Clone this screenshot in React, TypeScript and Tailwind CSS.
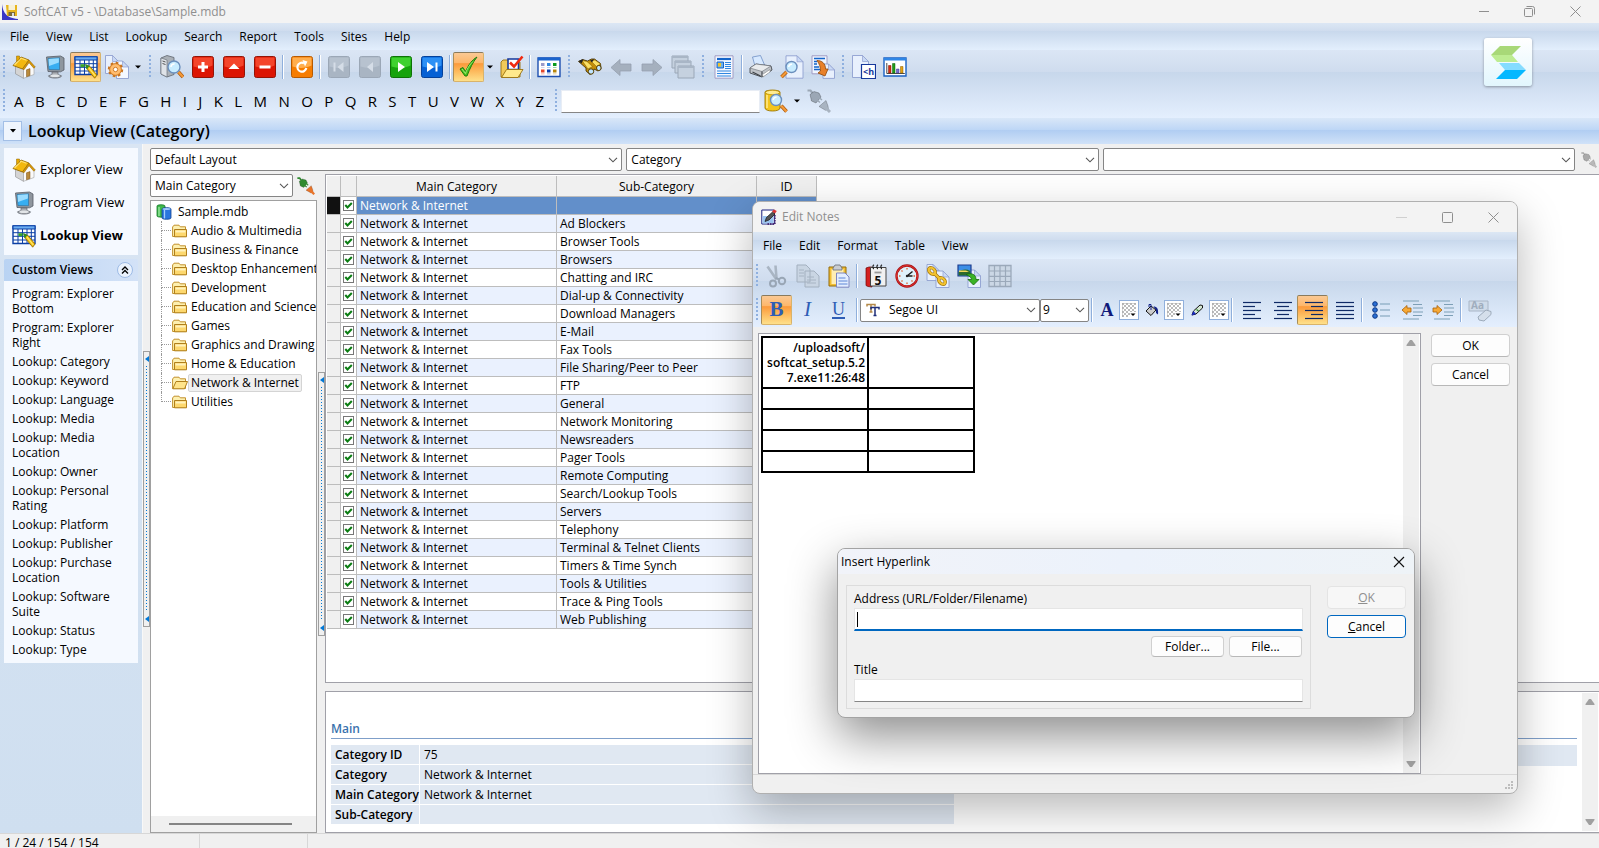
import { useState, type ReactNode } from "react";
import clsx from "clsx";

const SUB_CATEGORIES = [
  "",
  "Ad Blockers",
  "Browser Tools",
  "Browsers",
  "Chatting and IRC",
  "Dial-up & Connectivity",
  "Download Managers",
  "E-Mail",
  "Fax Tools",
  "File Sharing/Peer to Peer",
  "FTP",
  "General",
  "Network Monitoring",
  "Newsreaders",
  "Pager Tools",
  "Remote Computing",
  "Search/Lookup Tools",
  "Servers",
  "Telephony",
  "Terminal & Telnet Clients",
  "Timers & Time Synch",
  "Tools & Utilities",
  "Trace & Ping Tools",
  "Web Publishing",
];

const TREE = [
  "Audio & Multimedia",
  "Business & Finance",
  "Desktop Enhancement",
  "Development",
  "Education and Science",
  "Games",
  "Graphics and Drawing",
  "Home & Education",
  "Network & Internet",
  "Utilities",
];

const CUSTOM_VIEWS = [
  "Program: Explorer Bottom",
  "Program: Explorer Right",
  "Lookup: Category",
  "Lookup: Keyword",
  "Lookup: Language",
  "Lookup: Media",
  "Lookup: Media Location",
  "Lookup: Owner",
  "Lookup: Personal Rating",
  "Lookup: Platform",
  "Lookup: Publisher",
  "Lookup: Purchase Location",
  "Lookup: Software Suite",
  "Lookup: Status",
  "Lookup: Type",
];

const DETAILS = [
  ["Category ID", "75"],
  ["Category", "Network & Internet"],
  ["Main Category", "Network & Internet"],
  ["Sub-Category", ""],
];

/* ---------- icons ---------- */

function Icon({ children, className = "h-6 w-6" }: { children: ReactNode; className?: string }) {
  return (
    <svg viewBox="0 0 24 24" className={clsx("shrink-0", className)} fill="none" aria-hidden="true">
      {children}
    </svg>
  );
}

const HomeIcon = () => (
  <Icon>
    <path d="M3.500 11l8 3v9.300l-8-4.500z" fill="#d4d4d4" stroke="#8c8c8c" strokeWidth=".6" />
    <path d="M11.500 14l5.500-7.500 5 5.500v7.500l-10.500 3.800z" fill="#fafafa" stroke="#a0a0a0" strokeWidth=".6" />
    <path d="M14.500 21.800v-7l3.500-1.200v7z" fill="#b98a3c" stroke="#7a4f10" strokeWidth=".5" />
    <path d="M1 10.500L9 2l8 3-6.500 9z" fill="#f3b80e" stroke="#8f6500" strokeWidth=".8" />
    <path d="M2.500 10L9 3.300l5.500 2" stroke="#ffe173" strokeWidth="1.200" />
    <path d="M17 5l6.300 7-1.500 1.200-4.800-5.500-5 7-1.500-.7z" fill="#d9980a" stroke="#8f6500" strokeWidth=".5" />
    <path d="M4.500 1h3v3.200l-3 2.300z" fill="#e8a900" stroke="#8f6500" strokeWidth=".5" />
  </Icon>
);

const MonitorIcon = () => (
  <Icon>
    <path d="M3.500 2l14-1 3.500 2v12l-3.500 1.800L5 16.500z" fill="#8f969e" stroke="#555c66" strokeWidth=".8" />
    <path d="M5 3.500l11.500-.8v12L6 14.500z" fill="#37aef2" stroke="#2b6e9e" strokeWidth=".6" />
    <path d="M5.600 4l10.300-.7v4.200L6 11z" fill="#9adcff" />
    <path d="M9 17h6v2.500l3.500 1.300c0 3-13 3-13 0L9 19.500z" fill="#a9adb3" stroke="#5b6068" strokeWidth=".7" />
    <ellipse cx="12" cy="20.800" rx="4.600" ry="1.200" fill="#e2e5e8" />
  </Icon>
);

const LookupIcon = () => (
  <Icon>
    <path d="M1 2h22v17.500H1z" fill="#fff" stroke="#0b3fa5" strokeWidth="1.400" />
    <path d="M1 1.800h22v3.200H1z" fill="#6badf2" stroke="#0b3fa5" />
    <path d="M6 5v14.500M10.500 5v14.500M15 5v14.500M19.300 5v14.500M1 8.700h22M1 12.300h22M1 16h22" stroke="#0b3fa5" strokeWidth="1" />
    <path d="M6.500 9.200h4v3h-4z" fill="#3aa52a" />
    <path d="M12 10l4 1.500 7 8.500-2.300 3.200-7.200-8.700z" fill="#f4c20d" stroke="#8a6100" strokeWidth=".8" />
    <path d="M11 9l4.500 2-3 3.500z" fill="#2f8f22" />
    <path d="M15 13l6.300 8" stroke="#ffe87a" strokeWidth="1.200" />
  </Icon>
);

const PageShape = ({ x = 4, y = 1, w = 17, h = 22, tint = "#e8f0fd" }) => (
  <>
    <path d={`M${x} ${y}h${w - 6}l6 6v${h - 6}h${-w}z`} fill={tint} stroke="#8f9fd0" strokeWidth=".9" />
    <path d={`M${x + w - 6} ${y}v6h6z`} fill="#c9d9f5" stroke="#8f9fd0" strokeWidth=".7" />
  </>
);

const GearPageIcon = () => (
  <Icon>
    <PageShape x={0.5} y={0.5} w={13} h={18} />
    <PageShape x={11.5} y={6} w={12} h={17.5} tint="#f4f8ff" />
    <circle cx="10.500" cy="14.500" r="6" fill="#f7a54a" stroke="#c8711b" strokeWidth=".8" />
    <circle cx="10.500" cy="14.500" r="6.800" stroke="#c8711b" strokeWidth="1.800" strokeDasharray="2.700 2.640" />
    <circle cx="10.500" cy="14.500" r="5" fill="#ffbd70" />
    <circle cx="10.500" cy="14.500" r="2.200" fill="#fff" stroke="#c8711b" strokeWidth=".9" />
  </Icon>
);

const Lens = ({ cx, cy, r = 6, hx, hy }: { cx: number; cy: number; r?: number; hx: number; hy: number }) => (
  <>
    <path d={`M${cx + (hx - cx) * 0.5} ${cy + (hy - cy) * 0.5}L${hx} ${hy}`} stroke="#a9560d" strokeWidth="3.600" />
    <path d={`M${cx + (hx - cx) * 0.5} ${cy + (hy - cy) * 0.5}L${hx} ${hy}`} stroke="#f59a37" strokeWidth="2.200" />
    <circle cx={cx} cy={cy} r={r} fill="#c8ecff" stroke="#6b8fbd" strokeWidth="1.400" />
    <path d={`M${cx - r * 0.5} ${cy}a${r * 0.5} ${r * 0.5} 0 0 1 ${r * 0.6} ${-r * 0.5}`} stroke="#fff" strokeWidth="1.500" />
  </>
);

const SearchTowerIcon = () => (
  <Icon>
    <path d="M1 3l6-2.500 7 2v17L7 22l-6-3z" fill="#aab0b7" stroke="#60666e" strokeWidth=".8" />
    <path d="M1 3l6 2v17l-6-3z" fill="#dfe3e8" stroke="#60666e" strokeWidth=".6" />
    <path d="M2.500 6l3 1M2.500 8.500l3 1" stroke="#555" />
    <Lens cx={14} cy={12} r={6} hx={23} hy={22} />
  </Icon>
);

function SquareIcon({ tone, children }: { tone: string; children: ReactNode }) {
  const fills: Record<string, string[]> = {
    red: ["#f4452b", "#dc1503", "#941406"],
    orange: ["#ffae4e", "#f67c00", "#b75a00"],
    gray: ["#b7c2cf", "#a9b5c3", "#9ba7b6"],
    green: ["#3fd12f", "#16a30c", "#0d7306"],
    blue: ["#2d90f5", "#0560d4", "#04419a"],
  };
  const [hi, lo, edge] = fills[tone];
  return (
    <Icon>
      <rect x="1.500" y="1.500" width="21" height="21" rx="2" fill={lo} stroke={edge} />
      <path d="M2.500 2.500h19v8c-6 3-13 3-19 1z" fill={hi} />
      {children}
    </Icon>
  );
}

const CheckIcon = () => (
  <Icon>
    <path d="M3 14l3-1.500 2.500 4C12 9 15 5 20 2c-4 5-7 11-10 19H8z" fill="#4cc21f" stroke="#1c7d0c" strokeWidth="1" />
    <path d="M5 14l3.500 4.500c2-6 4.500-9 7.500-12" stroke="#a8ec7c" strokeWidth=".9" />
  </Icon>
);

const FolderCheckIcon = () => (
  <Icon>
    <path d="M1 22V7l2-2h6l2 2h9v15z" fill="#f1c95a" stroke="#99700e" strokeWidth=".9" />
    <path d="M8 4h10.500v10.500H8z" fill="#fff" stroke="#15379c" strokeWidth="1.600" />
    <path d="M1.500 22.500l5-8H23l-5 8z" fill="#ffe98c" stroke="#99700e" strokeWidth=".9" />
    <path d="M10 7.500l4 4 8.500-10" stroke="#f02a10" strokeWidth="2.600" />
  </Icon>
);

const GridViewIcon = () => (
  <Icon>
    <path d="M1 3h22v18.500H1z" fill="#fff" stroke="#1d4fb0" strokeWidth="1.400" />
    <path d="M1 2.500h22v3H1z" fill="#1a63cc" />
    {["#9a9ac9", "#2f86e0", "#0a9a1a", "#e4462a", "#0a3fae", "#b8860b"].map((c, i) => (
      <g key={i} fill={c}>
        <path d={`M${4 + (i % 3) * 6} ${8 + Math.floor(i / 3) * 6.500}h3.500v3h-3.500z`} />
        <path d={`M${4 + (i % 3) * 6} ${12 + Math.floor(i / 3) * 6.500}h3.500v.8h-3.500z`} opacity=".5" />
      </g>
    ))}
  </Icon>
);

const BinocularsIcon = () => (
  <Icon>
    <path d="M.5 6.500l4-2 5 1.500 4-2h3l6 4.500.5 5.500-3 2-4-2-1 4-3 1.500-4-3.500v-3z" fill="#c48e08" stroke="#3b2a00" strokeWidth=".8" />
    <path d="M4 5.500l5 1 5.500 5-4.500 2.500zM13 6l4-1 5.500 4-4 2.500z" fill="#fbe065" stroke="#7a5800" strokeWidth=".5" />
    <path d="M.5 6l5-2-2 4.500zM12 5.500l4-1.500-2 3.500z" fill="#222" />
    <ellipse cx="13" cy="16.500" rx="2.700" ry="2.700" fill="#bfe4ff" stroke="#5a4200" />
    <ellipse cx="20.800" cy="13" rx="2.300" ry="2.600" fill="#bfe4ff" stroke="#5a4200" />
  </Icon>
);

const ArrowIcon = ({ flip = false }: { flip?: boolean }) => (
  <Icon>
    <path
      d={flip ? "M22 12.500l-9-8V9H2v7h11v4.500z" : "M2 12.500l9-8V9h11v7H11v4.500z"}
      fill="#a5b0be"
      stroke="#94a0af"
      strokeWidth=".8"
    />
  </Icon>
);

const CascadeIcon = () => (
  <Icon>
    {[0, 1, 2].map((i) => (
      <g key={i}>
        <path d={`M${1 + i * 3} ${1 + i * 5}h16v12h-16z`} fill="#c5d1df" stroke="#9aa7b7" />
        <path d={`M${1 + i * 3} ${1 + i * 5}h16v2h-16z`} fill="#a9b6c6" />
      </g>
    ))}
  </Icon>
);

const ReportIcon = () => (
  <Icon>
    <path d="M3 .8h18v22.400H3z" fill="#f3f7ff" stroke="#a09cc4" />
    <path d="M5 4h14" stroke="#1565c9" strokeWidth="2.200" />
    <path d="M5 7h6.500v6H5z" fill="#6fb0ea" stroke="#1565c9" />
    <path d="M6 8h3v3.500H6z" fill="#f0c22a" />
    <path d="M13 7.500h6M13 9.500h6M13 11.500h6M13 13.500h6M5 16h14M5 18.500h14M5 21h14" stroke="#2f86e0" strokeWidth="1.100" />
  </Icon>
);

const PrinterIcon = () => (
  <Icon>
    <path d="M6 11L3.500 2l8-1.500L16 11z" fill="#d7e9ff" stroke="#6f8fc4" strokeWidth=".8" />
    <path d="M1 13l6-4 15 2 1 4-10 7L1 18z" fill="#bfc3c8" stroke="#45494f" strokeWidth=".9" />
    <path d="M1 13l6-4 15 2-9 5.500z" fill="#e9ebed" stroke="#6a6f76" strokeWidth=".6" />
    <path d="M3.500 17l8 4M13 16.500v5" stroke="#3b3f45" strokeWidth="1.100" />
    <path d="M13.500 19.500l7.500-5v2.500L14 22z" fill="#fff" stroke="#777" strokeWidth=".5" />
  </Icon>
);

const PreviewIcon = () => (
  <Icon>
    <PageShape x={6} y={0.8} w={17} h={22.400} />
    <Lens cx={11.500} cy={12} r={5.500} hx={1.500} hy={22} />
  </Icon>
);

const ExportIcon = () => (
  <Icon>
    <path d="M1 .8h15v18H1z" fill="#eff5ff" stroke="#a09cc4" />
    <path d="M3 3.500h11M3 6.500h3M3 9h3M3 12h5M3 14.500h6" stroke="#1565c9" strokeWidth="1.500" />
    <PageShape x={12} y={9} w={11.500} h={14.400} />
    <path d="M6 5.500c5 0 8.500 3 8.500 8.500H17l-3 7-7-3 2.500-2c0-4-1-7-3.500-10.500z" fill="#e8802a" stroke="#8f4608" strokeWidth=".8" />
  </Icon>
);

const HtmlIcon = () => (
  <Icon>
    <PageShape x={0.5} y={0.5} w={16} h={22} />
    <path d="M9.500 9.500h14v14h-14z" fill="#fff" stroke="#16379b" strokeWidth="1.200" />
    <text x="11" y="20" fontSize="9" fontWeight="700" fill="#16379b" fontFamily="Open Sans, sans-serif">
      &lt;h
    </text>
  </Icon>
);

const ChartIcon = () => (
  <Icon>
    <path d="M1 3h22v18H1z" fill="#fff" stroke="#1b62c4" strokeWidth="1.400" />
    <path d="M1 3h22v2.500H1z" fill="#2f86e6" />
    <path d="M3.800 8v10.500h18" stroke="#333" strokeWidth=".9" />
    <path d="M5.500 10.500h2.500v7.500H5.500z" fill="#d52b12" stroke="#7c1405" strokeWidth=".5" />
    <path d="M9.500 8.500h2.500v9.500H9.500z" fill="#1f9d1a" stroke="#0b5c08" strokeWidth=".5" />
    <path d="M13.500 14h2.500v4h-2.500z" fill="#7a6fd0" stroke="#3d3590" strokeWidth=".5" />
    <path d="M17.500 11.500h2.500v6.500h-2.500z" fill="#e5a312" stroke="#875d00" strokeWidth=".5" />
  </Icon>
);

const DbSearchIcon = () => (
  <Icon>
    <path d="M1 3c0-2.500 15-2.500 15 0v16c0 4-15 4-15 0z" fill="#f3c51d" stroke="#9c7600" strokeWidth=".9" />
    <ellipse cx="8.500" cy="3.500" rx="7" ry="2.200" fill="#ffec91" stroke="#b58b00" strokeWidth=".7" />
    <path d="M3 6v13" stroke="#ffe98a" strokeWidth="1.600" />
    <Lens cx={12} cy={11} r={5.500} hx={22.500} hy={22.500} />
  </Icon>
);

function PlugIcon({ top, bottom, className }: { top: string; bottom: string; className?: string }) {
  return (
    <Icon className={className}>
      <path d="M.5 1.500h3l2 2.500" stroke={top} strokeWidth="2.200" />
      <path d="M3 5.500L7 2.500l5 1.500L14 8l-5 6-4.500-2z" fill={top} stroke="rgba(0,0,0,.35)" strokeWidth=".7" />
      <path d="M12 8.500l3 2.500M10 11l3 2.500" stroke={top} strokeWidth="1.500" />
      <path d="M12 17.500l7-6 2 5.500.5 3.500-3 .8z" fill={bottom} stroke="rgba(0,0,0,.3)" strokeWidth=".7" />
      <path d="M18.500 18.500l4.500 4.500" stroke={bottom} strokeWidth="3" />
    </Icon>
  );
}

const FolderIcon = ({ open = false }: { open?: boolean }) => (
  <svg viewBox="0 0 16 14" className="h-[14px] w-4 shrink-0" fill="none" aria-hidden="true">
    <path d="M.6 12.500V3L2 1.200h5l1.300 1.600h5.200v9.700z" fill="#fdf0b0" stroke="#c2912e" />
    {open ? (
      <path d="M.8 12.800L4 5.500h11.500l-3 7.300z" fill="#ffe48a" stroke="#b07f1c" />
    ) : (
      <path d="M2.500 5.500h12v7.300h-12z" fill="#fdd86e" stroke="#b07f1c" />
    )}
    {!open && <path d="M3.500 6.500h10v2h-10z" fill="#fff2bd" />}
  </svg>
);

const DatabaseIcon = () => (
  <svg viewBox="0 0 16 16" className="h-4 w-4 shrink-0" fill="none" aria-hidden="true">
    <path d="M1 2c0-1.600 8-1.600 8 0v10c0 1.500-8 1.500-8 0z" fill="#3fb84b" stroke="#14762a" strokeWidth=".8" />
    <path d="M3 3v9" stroke="#a9f0ae" strokeWidth="1.200" />
    <path d="M6 5c0-1.800 9-1.800 9 0v9c0 1.700-9 1.700-9 0z" fill="#2a76de" stroke="#12418f" strokeWidth=".8" />
    <path d="M8.500 6v8.500" stroke="#a4cdfb" strokeWidth="1.300" />
    <ellipse cx="10.500" cy="5" rx="4" ry="1" fill="#9fc8fa" />
  </svg>
);

const CutIcon = () => (
  <Icon>
    <path d="M2.500 2.500l9 13M10.500 1.500l1 13" stroke="#a9b5c3" strokeWidth="2.600" />
    <circle cx="8" cy="19.500" r="3" stroke="#99a6b5" strokeWidth="2" />
    <circle cx="17" cy="17" r="3.200" stroke="#99a6b5" strokeWidth="2" />
    <path d="M10.500 14l4 1.500" stroke="#99a6b5" strokeWidth="2" />
  </Icon>
);

const CopyIcon = () => (
  <Icon>
    <path d="M1 1h9l4 4v13H1zM9 7h9l5 5v11H9z" fill="#c9d5e3" stroke="#a3b0bf" />
    <path d="M3 6h5M3 9h5M3 12h5M11 13h7M11 16h9M11 19h9" stroke="#a7b4c3" />
  </Icon>
);

const PasteIcon = () => (
  <Icon>
    <path d="M2 3h17v19H2z" fill="#f2bf34" stroke="#936a0a" />
    <path d="M4.500 5h12v15h-12z" fill="#ffeeb4" />
    <path d="M6 4l2-3h5l2 3v2H6z" fill="#c8ccd2" stroke="#666b73" strokeWidth=".8" />
    <path d="M9.500 9h8.500l4 4v10.200H9.500z" fill="#e3edff" stroke="#7c86c0" />
    <path d="M11.500 14h7M11.500 17h9M11.500 20h9" stroke="#5d86d6" />
  </Icon>
);

const CalendarIcon = () => (
  <Icon>
    <path d="M2 4l3-1h3v20l-4-.5-2-1z" fill="#d42020" stroke="#6d0707" strokeWidth=".7" />
    <path d="M6.500 3.500H22V22H6.500z" fill="#f1f1f1" stroke="#444" strokeWidth="1" />
    <path d="M10 .8c-2 1-1 4 0 4M14 .8c-2 1-1 4 0 4M18 .8c-2 1-1 4 0 4" stroke="#222" strokeWidth="1.200" />
    <path d="M10.500 8.500h7" stroke="#999" strokeWidth="1.800" />
    <text x="10.500" y="20.500" fontSize="12" fontWeight="700" fill="#111" fontFamily="Open Sans, sans-serif">
      5
    </text>
  </Icon>
);

const ClockIcon = () => (
  <Icon>
    <circle cx="12" cy="12" r="10.500" fill="#dff2fb" stroke="#a81212" strokeWidth="2.300" />
    <circle cx="12" cy="12" r="10.500" stroke="#e03232" strokeWidth="1" />
    <path d="M12 12l5.500-4.500M12 12h5.500" stroke="#1c1c1c" strokeWidth="1.400" />
    <circle cx="12" cy="12" r="1.200" fill="#222" />
    <path d="M12 4v1.500M12 18.500V20M4 12h1.500M18.500 12H20M6.500 17.500l1-1M16.500 16.500l1 1M6.500 6.500l1 1" stroke="#e06030" strokeWidth="1.300" />
  </Icon>
);

const LinkPageIcon = () => (
  <Icon>
    <PageShape x={1} y={0.5} w={12} h={16} />
    <PageShape x={10} y={7} w={13} h={16.500} />
    <g stroke="#9b7008" strokeWidth="3.400">
      <ellipse cx="6" cy="7" rx="2.600" ry="3.800" transform="rotate(-45 6 7)" />
      <ellipse cx="16" cy="17" rx="2.600" ry="3.800" transform="rotate(-45 16 17)" />
      <path d="M8 9l6 6" />
    </g>
    <g stroke="#f2c230" strokeWidth="2.200">
      <ellipse cx="6" cy="7" rx="2.600" ry="3.800" transform="rotate(-45 6 7)" />
      <ellipse cx="16" cy="17" rx="2.600" ry="3.800" transform="rotate(-45 16 17)" />
      <path d="M8 9l6 6" />
    </g>
  </Icon>
);

const ImageInsertIcon = () => (
  <Icon>
    <PageShape x={11} y={6} w={12.500} h={17.500} />
    <path d="M1 1h13v11H1z" fill="#3b8ee6" stroke="#1d3c8f" strokeWidth="1.200" />
    <path d="M1.600 8c4-3 8-3 11.800-1v4.500H1.600z" fill="#2d6a2c" />
    <path d="M2 6.500h7l3 1.500H2z" fill="#f2d75a" />
    <path d="M9 10.500c6-2 10 0 10 5h3L16.500 21l-5.500-5.500h3.500c0-2-2-3.500-5.500-5z" fill="#3bb326" stroke="#17690b" strokeWidth=".8" />
  </Icon>
);

const TableGridIcon = () => (
  <Icon>
    <path d="M1 1.500h22v21H1z" fill="#cbd7e5" stroke="#9ba9ba" strokeWidth="1.300" />
    <path d="M6.500 1.500v21M12 1.500v21M17.500 1.500v21M1 7h22M1 12.300h22M1 17.500h22" stroke="#9ba9ba" strokeWidth="1.200" />
  </Icon>
);

const AlignIcon = ({ kind }: { kind: "left" | "center" | "right" | "full" }) => {
  const lens = [18, 12, 18, 12, 18];
  return (
    <Icon>
      {lens.map((l, i) => {
        const w = kind === "full" ? 18 : l;
        const x = kind === "right" ? 22 - w : kind === "center" ? 13 - w / 2 : 4;
        return <path key={i} d={`M${x} ${4.500 + i * 4}h${w}`} stroke="#0f2a66" strokeWidth="1.200" />;
      })}
    </Icon>
  );
};

const ListIcon = () => (
  <Icon>
    {[6, 12, 18].map((y) => (
      <g key={y}>
        <circle cx="6" cy={y} r="2.300" fill="#2b6fd4" stroke="#0c3786" />
        <path d={`M11 ${y}h10`} stroke="#86a8bf" strokeWidth="1.200" />
      </g>
    ))}
  </Icon>
);

const IndentIcon = ({ out = false }: { out?: boolean }) => (
  <Icon>
    <path d="M3 3h16M13 6.500h9M13 10h10M13 14h10M13 17.500h9M3 21h16" stroke="#7d9fb6" strokeWidth="1.200" />
    <path
      d={out ? "M2 12l5-4.500V10h4v4H7v2.500z" : "M11 12L6 7.500V10H2v4h4v2.500z"}
      fill="#f7a935"
      stroke="#a85f07"
      strokeWidth=".8"
    />
  </Icon>
);

const ClearFormatIcon = () => (
  <Icon>
    <path d="M1 3h19v10H1z" fill="#cfdbe9" stroke="#a9b6c6" />
    <text x="3" y="11" fontSize="10" fontWeight="700" fill="#9fadbd" fontFamily="Open Sans, sans-serif">
      Aa
    </text>
    <path d="M10 19l8-7 5 1.500v3l-7 6.500-5-1z" fill="#d5dfeb" stroke="#9dabbb" />
  </Icon>
);

const BucketIcon = () => (
  <svg viewBox="0 0 14 14" className="h-[14px] w-[14px]" fill="none" aria-hidden="true">
    <path d="M1 8l5-5 5 4-5 5.500z" fill="#ccc" stroke="#111" />
    <path d="M6 7V1.500H4V4" stroke="#10208a" />
    <path d="M8.500 3.500c3.500 0 5 2 4.500 8l-2-1.500V7z" fill="#10208a" />
  </svg>
);

const PenIcon = () => (
  <svg viewBox="0 0 14 14" className="h-[14px] w-[14px]" fill="none" aria-hidden="true">
    <path d="M2 12l1.500-4L10 2l2.500.5V5L6 11z" fill="#d5e8d5" stroke="#111" strokeWidth="1" />
    <path d="M1.500 12.500L3.500 8 6 11z" fill="#1a2ac0" />
    <path d="M6.500 6.500l2 1.500" stroke="#2a8a2a" strokeWidth="1.300" />
  </svg>
);

const Chevron = () => (
  <svg viewBox="0 0 10 6" className="pointer-events-none absolute top-1/2 right-1 h-[6px] w-[10px] -translate-y-1/2" fill="none">
    <path d="M1 .8l4 4 4-4" stroke="#555" strokeWidth="1.100" />
  </svg>
);

const Triangle = ({ dir }: { dir: "up" | "down" }) => (
  <svg viewBox="0 0 10 8" className="h-2 w-[10px]" fill="#a0a0a0" aria-hidden="true">
    <path d={dir === "up" ? "M4 1h2l3.500 5v1h-9V6z" : "M.5 1h9v1L6 7H4L.5 2z"} />
  </svg>
);

/* ---------- small controls ---------- */

function ToolButton({ label, pressed, children }: { label: string; pressed?: boolean; children: ReactNode }) {
  return (
    <button
      type="button"
      aria-label={label}
      aria-pressed={pressed}
      className={clsx(
        "flex h-[30px] w-[31px] shrink-0 items-center justify-center",
        pressed &&
          "rounded-[2px] border border-t-[#8a7a5c] border-r-[#d9b36a] border-b-[#d9b36a] border-l-[#a88d58] bg-[linear-gradient(#fbc994_0%,#fdb76b_35%,#fb9a3c_38%,#fdbf63_70%,#fee08a_100%)]"
      )}
    >
      {children}
    </button>
  );
}

const DropArrow = ({ label }: { label: string }) => (
  <button type="button" aria-label={label} className="flex h-[30px] w-3 shrink-0 items-center justify-center">
    <svg viewBox="0 0 6 4" className="h-1 w-[6px]">
      <path d="M0 .5h6L3 3.500z" fill="#000" />
    </svg>
  </button>
);

const Sep = () => (
  <span className="flex w-[6px] shrink-0 justify-center">
    <span className="h-6 w-[2px] border-r border-white bg-[#8fafdc]" />
  </span>
);

const Grip = ({ className = "w-[10px]" }: { className?: string }) => (
  <span className={clsx("flex shrink-0 justify-center", className)}>
    <span className="h-6 w-[2px] bg-[repeating-linear-gradient(#8fb0df_0_2px,transparent_2px_4px)]" />
  </span>
);

function Combo({ label, value, className, inner }: { label: string; value: string; className?: string; inner?: string }) {
  return (
    <div className={clsx("relative h-[23px]", className)}>
      <select
        aria-label={label}
        className={clsx(
          "block h-full w-full appearance-none rounded-[2px] border border-[#858585] bg-white pr-4 text-[12px] leading-[20px] outline-none",
          inner ?? "pl-1"
        )}
      >
        <option>{value}</option>
      </select>
      <Chevron />
    </div>
  );
}

function PushButton({ children, disabled, focused, className }: { children: ReactNode; disabled?: boolean; focused?: boolean; className: string }) {
  return (
    <button
      type="button"
      disabled={disabled}
      className={clsx(
        "flex items-center justify-center rounded-[4px] border text-[12px]",
        disabled && "border-[#e4e4e4] bg-[#f7f7f7] text-[#8f8f8f]",
        focused && "border-[#0067c0] bg-[#fdfdfd]",
        !disabled && !focused && "border-[#d0d0d0] border-b-[#b8b8b8] bg-[#fdfdfd]",
        className
      )}
    >
      {children}
    </button>
  );
}

function MenuBar({ items }: { items: string[] }) {
  return (
    <nav className="flex h-[27px] shrink-0 items-center gap-px bg-[linear-gradient(#dce7f4_0,#cfdcee_8px,#c8d8ec_8px,#e3effd_100%)] px-[2px] text-[12px]">
      {items.map((item) => (
        <button key={item} type="button" className="px-2">
          {item}
        </button>
      ))}
    </nav>
  );
}

function Splitter({ className }: { className: string }) {
  return (
    <div className="flex w-[7px] shrink-0 flex-col justify-center">
      <button
        type="button"
        aria-label="Toggle pane"
        className={clsx("flex w-full flex-col items-center justify-between border border-[#9f9f9f] bg-[#f0f0f0] py-1", className)}
      >
        <svg viewBox="0 0 4 6" className="h-[6px] w-1">
          <path d="M4 0v6L0 3z" fill="#0078d7" />
        </svg>
        <span className="my-1 w-px flex-1 bg-[repeating-linear-gradient(#0078d7_0_1px,transparent_1px_3px)]" />
        <svg viewBox="0 0 4 6" className="h-[6px] w-1">
          <path d="M4 0v6L0 3z" fill="#0078d7" />
        </svg>
      </button>
    </div>
  );
}

/* ---------- main window ---------- */

const TOOLBAR_BG = "shrink-0 bg-[linear-gradient(#dbe6f5_0,#cfdcee_22px,#c7d7eb_22px,#e4effe_100%)]";

function MainToolbars() {
  return (
    <div className={TOOLBAR_BG}>
      <div className="flex h-[34px] items-center">
        <Grip className="w-2" />
        <ToolButton label="Explorer View"><HomeIcon /></ToolButton>
        <ToolButton label="Program View"><MonitorIcon /></ToolButton>
        <ToolButton label="Lookup View" pressed><LookupIcon /></ToolButton>
        <ToolButton label="Custom Views"><GearPageIcon /></ToolButton>
        <DropArrow label="Custom view list" />
        <Grip className="w-3" />
        <ToolButton label="Find program"><SearchTowerIcon /></ToolButton>
        <ToolButton label="Add">
          <SquareIcon tone="red"><path d="M12 7v10M7 12h10" stroke="#fff" strokeWidth="3" /></SquareIcon>
        </ToolButton>
        <ToolButton label="Edit">
          <SquareIcon tone="red"><path d="M12 8.500l5.500 5.500h-11z" fill="#fff" /></SquareIcon>
        </ToolButton>
        <ToolButton label="Delete">
          <SquareIcon tone="red"><path d="M6.500 12h11" stroke="#fff" strokeWidth="3" /></SquareIcon>
        </ToolButton>
        <Sep />
        <ToolButton label="Refresh">
          <SquareIcon tone="orange">
            <path d="M14 8.200a4.500 4.500 0 1 0 2.300 4.800" stroke="#fff" strokeWidth="2.200" />
            <path d="M12.500 5l5 1.500-2.500 5z" fill="#fff" />
          </SquareIcon>
        </ToolButton>
        <Sep />
        <ToolButton label="First">
          <SquareIcon tone="gray">
            <path d="M7.500 7.500v9" stroke="#d5dde7" strokeWidth="2" />
            <path d="M16.500 7v10l-6-5z" fill="#d5dde7" />
          </SquareIcon>
        </ToolButton>
        <ToolButton label="Previous">
          <SquareIcon tone="gray"><path d="M15 7v10l-6-5z" fill="#d5dde7" /></SquareIcon>
        </ToolButton>
        <ToolButton label="Next">
          <SquareIcon tone="green"><path d="M9 7v10l7-5z" fill="#fff" /></SquareIcon>
        </ToolButton>
        <ToolButton label="Last">
          <SquareIcon tone="blue">
            <path d="M16.500 7.500v9" stroke="#fff" strokeWidth="2" />
            <path d="M7 7v10l7-5z" fill="#fff" />
          </SquareIcon>
        </ToolButton>
        <Sep />
        <ToolButton label="Checked" pressed><CheckIcon /></ToolButton>
        <DropArrow label="Check options" />
        <ToolButton label="Check folder"><FolderCheckIcon /></ToolButton>
        <Sep />
        <ToolButton label="Layout"><GridViewIcon /></ToolButton>
        <Grip />
        <ToolButton label="Find"><BinocularsIcon /></ToolButton>
        <ToolButton label="Back"><ArrowIcon /></ToolButton>
        <ToolButton label="Forward"><ArrowIcon flip /></ToolButton>
        <ToolButton label="Windows"><CascadeIcon /></ToolButton>
        <Grip />
        <ToolButton label="Report"><ReportIcon /></ToolButton>
        <Sep />
        <ToolButton label="Print"><PrinterIcon /></ToolButton>
        <ToolButton label="Preview"><PreviewIcon /></ToolButton>
        <ToolButton label="Export"><ExportIcon /></ToolButton>
        <Grip />
        <ToolButton label="HTML"><HtmlIcon /></ToolButton>
        <ToolButton label="Statistics"><ChartIcon /></ToolButton>
      </div>
      <div className="flex h-[34px] items-center">
        <Grip className="w-2" />
        <div className="flex w-[543px] justify-between pr-[7px] pl-[6px] text-[15px]">
          {"ABCDEFGHIJKLMNOPQRSTUVWXYZ".split("").map((letter) => (
            <button key={letter} type="button">
              {letter}
            </button>
          ))}
        </div>
        <Grip />
        <input
          type="text"
          aria-label="Quick search"
          className="h-[23px] w-[199px] border border-[#e8edf5] border-b-[#868686] bg-white px-1 text-[12px] outline-none"
        />
        <ToolButton label="Search database"><DbSearchIcon /></ToolButton>
        <DropArrow label="Search options" />
        <ToolButton label="Disconnect"><PlugIcon top="#9ba7b5" bottom="#a9b4c1" /></ToolButton>
      </div>
    </div>
  );
}

function Sidebar() {
  return (
    <aside className="w-[143px] shrink-0 border-r border-[#f8f8f8] bg-[linear-gradient(#d9e5f3,#cfdff0)] pt-1 pr-1 pl-1">
      <div className="flex flex-col bg-[#f5f9ff] pt-[5px] pb-[3px] text-[13px]">
        <a href="#explorer" className="flex h-[33px] items-center gap-1 pl-2"><HomeIcon />Explorer View</a>
        <a href="#program" className="flex h-[33px] items-center gap-1 pl-2"><MonitorIcon />Program View</a>
        <a href="#lookup" className="flex h-[33px] items-center gap-1 pl-2 font-bold"><LookupIcon />Lookup View</a>
      </div>
      <div className="mt-1 flex h-[22px] items-center justify-between rounded-t-[2px] bg-[linear-gradient(90deg,#b9d3f3,#d3e2f7)] pr-[5px] pl-2">
        <h2 className="text-[12px] font-semibold">Custom Views</h2>
        <button type="button" aria-label="Collapse" className="flex h-4 w-4 items-center justify-center rounded-full border border-[#9dbbe6] bg-[#eaf2fd]">
          <svg viewBox="0 0 8 8" className="h-2 w-2" fill="none">
            <path d="M1 4l3-3 3 3M1 7.500l3-3 3 3" stroke="#000" strokeWidth="1.300" />
          </svg>
        </button>
      </div>
      <ul className="flex flex-col gap-1 bg-[#f5f9ff] px-2 pt-[5px] pb-[6px] text-[12px] leading-[15px]">
        {CUSTOM_VIEWS.map((view) => (
          <li key={view}>
            <a href="#view" className="block">{view}</a>
          </li>
        ))}
      </ul>
    </aside>
  );
}

function CategoryTree() {
  return (
    <div className="flex w-[167px] shrink-0 flex-col">
      <div className="flex items-center gap-1 pb-[3px]">
        <Combo label="Group by" value="Main Category" className="w-[143px]" />
        <button type="button" aria-label="Connect">
          <PlugIcon top="#2f8a2f" bottom="#e8742a" className="h-[18px] w-[18px]" />
        </button>
      </div>
      <div className="flex min-h-0 flex-1 flex-col overflow-hidden border border-[#a0a0a0] bg-white text-[12px] whitespace-nowrap">
        <div className="flex-1 pt-px">
          <div className="flex h-[19px] items-center gap-[6px] pl-[5px]">
            <DatabaseIcon />
            Sample.mdb
          </div>
          <ul className="pl-[10px]">
            {TREE.map((name, i) => (
              <li key={name} className="flex h-[19px] items-center">
                <span className="flex w-[11px] shrink-0 flex-col self-stretch">
                  <span className="h-[10px] w-[10px] border-b border-l border-dotted border-[#999]" />
                  {i < TREE.length - 1 && <span className="flex-1 border-l border-dotted border-[#999]" />}
                </span>
                <FolderIcon open={name === "Network & Internet"} />
                <span
                  className={clsx(
                    "rounded-[2px] border px-[2px] leading-[16px]",
                    name === "Network & Internet" ? "border-[#d4d4d4] bg-[#f0f0f0]" : "border-transparent"
                  )}
                >
                  {name}
                </span>
              </li>
            ))}
          </ul>
        </div>
        <div className="flex h-4 items-center bg-[#f0f0f0] pr-6 pl-[18px]">
          <div className="h-[2px] w-full bg-[#858585]" />
        </div>
      </div>
    </div>
  );
}

function CheckBox({ label }: { label: string }) {
  const [checked, setChecked] = useState(true);
  return (
    <label className="relative mx-auto flex h-[11px] w-[11px] items-center justify-center">
      <input
        type="checkbox"
        aria-label={label}
        checked={checked}
        onChange={() => setChecked(!checked)}
        className="h-[11px] w-[11px] appearance-none border border-[#777] bg-white"
      />
      {checked && (
        <svg viewBox="0 0 9 9" className="pointer-events-none absolute h-[9px] w-[9px]" fill="none">
          <path d="M1.300 4l2.200 2.500L7.800 2" stroke="#0a7d12" strokeWidth="2" />
        </svg>
      )}
    </label>
  );
}

function LookupGrid() {
  return (
    <section className="min-h-0 flex-1 overflow-hidden border border-r-0 border-[#a0a0a8] bg-white pt-px pl-px">
      <table className="w-[490px] table-fixed border-separate border-spacing-0 text-left text-[12px]">
        <colgroup>
          <col className="w-[14px]" />
          <col className="w-4" />
          <col className="w-[200px]" />
          <col className="w-[200px]" />
          <col />
        </colgroup>
        <thead>
          <tr className="h-[21px] bg-[#f0f0f0]">
            <th className="border-r border-b border-[#bdbdbd] p-0" />
            <th className="border-r border-b border-[#bdbdbd] p-0" />
            <th className="border-r border-b border-[#bdbdbd] p-0 pt-[2px] text-center leading-[18px] font-normal">Main Category</th>
            <th className="border-r border-b border-[#bdbdbd] p-0 pt-[2px] text-center leading-[18px] font-normal">Sub-Category</th>
            <th className="border-r border-b border-[#bdbdbd] p-0 pt-[2px] text-center leading-[18px] font-normal">ID</th>
          </tr>
        </thead>
        <tbody>
          {SUB_CATEGORIES.map((sub, i) => (
            <tr
              key={i}
              className={clsx("h-[18px]", i === 0 ? "bg-[#628fca] text-white" : i % 2 ? "bg-[#eaf1fe]" : "bg-white")}
            >
              <td className={clsx("border-r border-b border-[#bdbdbd] p-0", i === 0 ? "bg-[#111]" : "bg-[#f0f0f0]")} />
              <td className="border-r border-b border-[#bdbdbd] bg-white p-0">
                <CheckBox label={sub || "Network & Internet"} />
              </td>
              <td className="border-r border-b border-[#bdbdbd] p-0 pl-[3px] leading-[17px]">Network &amp; Internet</td>
              <td className="border-r border-b border-[#bdbdbd] p-0 pl-[3px] leading-[17px]">{sub}</td>
              <td className="border-r border-b border-[#bdbdbd] p-0 pr-[2px] text-right leading-[17px]">{i === 0 ? "75" : ""}</td>
            </tr>
          ))}
        </tbody>
      </table>
    </section>
  );
}

function DetailPane() {
  return (
    <section className="flex h-[142px] shrink-0 border border-r-0 border-[#a0a0a8] bg-white p-px text-[12px]">
      <div className="flex-1 pr-[5px] pl-1">
        <h3 className="mt-[26px] h-5 border-b border-[#7f9fc9] leading-[19px] font-semibold text-[#3a72ad]">Main</h3>
        <div className="mt-[6px] flex items-start gap-px">
          <table className="w-1/2 table-fixed border-separate border-spacing-0 text-left leading-[19px]">
            <tbody>
              {DETAILS.map(([name, value]) => (
                <tr key={name} className="h-5">
                  <th className="w-[89px] border-r border-b border-white bg-[#e0e8f2] p-0 pl-1 font-semibold whitespace-nowrap">{name}</th>
                  <td className="border-b border-white bg-[#e0e8f2] p-0 pl-1">{value}</td>
                </tr>
              ))}
            </tbody>
          </table>
          <div className="h-[21px] flex-1 bg-[#e0e8f2]" />
        </div>
      </div>
      <div className="flex w-4 shrink-0 flex-col items-center justify-between bg-[#f0f0f0] py-[5px]">
        <Triangle dir="up" />
        <Triangle dir="down" />
      </div>
    </section>
  );
}

/* ---------- dialogs ---------- */

function Swatch({ label }: { label: string }) {
  return (
    <button type="button" aria-label={label} className="h-5 w-5 shrink-0 border border-[#8fafdc] bg-white p-[2px]">
      <svg viewBox="0 0 14 14" className="h-[14px] w-[14px]">
        {Array.from({ length: 49 }, (_, i) => (i % 2 ? null : <rect key={i} x={(i % 7) * 2} y={Math.floor(i / 7) * 2} width="2" height="2" fill="#bbb" />))}
        <path d="M0 14V0h14" fill="none" stroke="#aaa" />
        <path d="M8 9h6v5H8z" fill="#fff" />
        <path d="M8.500 10.500h5l-2.500 2.500z" fill="#000" />
      </svg>
    </button>
  );
}

function InsertHyperlink() {
  return (
    <section
      role="dialog"
      aria-label="Insert Hyperlink"
      className="absolute top-[548px] left-[837px] w-[578px] overflow-hidden rounded-lg border border-[#a3a3a3] bg-[#f0f0f0] text-[12px] shadow-[0_18px_48px_rgba(0,0,0,0.45)]"
    >
      <header className="flex h-[25px] items-center justify-between bg-[linear-gradient(90deg,#f1f3f9,#ecf2fb,#eef3f7)] pr-[9px] pl-[3px]">
        <h2>Insert Hyperlink</h2>
        <button type="button" aria-label="Close">
          <svg viewBox="0 0 12 12" className="h-3 w-3" fill="none">
            <path d="M1 1l10 10M11 1L1 11" stroke="#111" strokeWidth="1.100" />
          </svg>
        </button>
      </header>
      <div className="flex items-start justify-between pt-[11px] pr-2 pb-2 pl-2">
        <fieldset className="flex w-[465px] flex-col border border-[#dcdcdc] px-[7px] pt-1 pb-[6px]">
          <label htmlFor="address" className="leading-[18px]">Address (URL/Folder/Filename)</label>
          <div className="flex h-[23px] items-center border border-[#e5e5e5] border-b-2 border-b-[#0067c0] bg-white pl-[2px]">
            <span className="h-[15px] w-px bg-black" />
            <input id="address" type="text" className="min-w-0 flex-1 bg-transparent outline-none" />
          </div>
          <div className="mt-[5px] mr-px flex justify-end gap-[5px]">
            <PushButton className="h-[21px] w-[73px]">Folder...</PushButton>
            <PushButton className="h-[21px] w-[73px]">File...</PushButton>
          </div>
          <label htmlFor="title" className="mt-1 leading-[18px]">Title</label>
          <input id="title" type="text" className="h-[23px] border border-[#e5e5e5] border-b-[#868686] bg-white px-1 outline-none" />
        </fieldset>
        <div className="flex flex-col gap-[6px] pt-px">
          <PushButton className="h-[23px] w-[79px]" disabled>
            <span><u>O</u>K</span>
          </PushButton>
          <PushButton className="h-[23px] w-[79px]" focused>
            <span><u>C</u>ancel</span>
          </PushButton>
        </div>
      </div>
    </section>
  );
}

function EditNotes() {
  return (
    <section
      role="dialog"
      aria-label="Edit Notes"
      className="absolute top-[201px] left-[752px] flex h-[593px] w-[766px] flex-col overflow-hidden rounded-lg border border-[#b0b0b0] bg-[#f0f0f0] shadow-[0_16px_44px_rgba(0,0,0,0.28)]"
    >
      <header className="flex h-[30px] shrink-0 items-center bg-[#f3f3f3] pr-[18px] pl-2 text-[12px] text-[#8f8f8f]">
        <svg viewBox="0 0 16 16" className="h-4 w-4" fill="none">
          <path d="M.8 1h12.500v14H.8z" fill="#fff" stroke="#1a1f7e" />
          <path d="M1.500 7h11v7.500h-11z" fill="#9cc4f0" />
          <path d="M4 12.500l1.500-4L11.500 3l2.500 2-6 6z" fill="#555" stroke="#111" strokeWidth=".7" />
          <path d="M11 2.500l2-2 2.800 1.500-1.800 2.500z" fill="#d33" />
          <path d="M14 6v9H6" stroke="#3c1260" strokeWidth="1.300" strokeDasharray="1.500 1" />
        </svg>
        <h2 className="ml-[5px] flex-1">Edit Notes</h2>
        <div className="flex gap-[35px]">
          <button type="button" aria-label="Minimize" className="text-[#d0d0d0]">
            <svg viewBox="0 0 11 11" className="h-[11px] w-[11px]" stroke="currentColor"><path d="M0 5.500h11" /></svg>
          </button>
          <button type="button" aria-label="Maximize">
            <svg viewBox="0 0 11 11" className="h-[11px] w-[11px]" fill="none" stroke="currentColor"><rect x=".5" y=".5" width="10" height="10" rx="1" /></svg>
          </button>
          <button type="button" aria-label="Close">
            <svg viewBox="0 0 11 11" className="h-[11px] w-[11px]" stroke="currentColor"><path d="M.5.500l10 10M10.500.500l-10 10" /></svg>
          </button>
        </div>
      </header>
      <MenuBar items={["File", "Edit", "Format", "Table", "View"]} />
      <div className={TOOLBAR_BG}>
        <div className="flex h-[34px] items-center">
          <Grip className="w-2" />
          <ToolButton label="Cut"><CutIcon /></ToolButton>
          <ToolButton label="Copy"><CopyIcon /></ToolButton>
          <ToolButton label="Paste"><PasteIcon /></ToolButton>
          <Sep />
          <ToolButton label="Insert date"><CalendarIcon /></ToolButton>
          <ToolButton label="Insert time"><ClockIcon /></ToolButton>
          <ToolButton label="Insert hyperlink"><LinkPageIcon /></ToolButton>
          <ToolButton label="Insert image"><ImageInsertIcon /></ToolButton>
          <ToolButton label="Insert table"><TableGridIcon /></ToolButton>
        </div>
        <div className="flex h-[34px] items-center">
          <Grip className="w-2" />
          <ToolButton label="Bold" pressed>
            <span className="font-['Liberation_Serif',serif] text-[21px] font-bold text-[#2f5db5]">B</span>
          </ToolButton>
          <ToolButton label="Italic">
            <span className="font-['Liberation_Serif',serif] text-[21px] text-[#2f5db5] italic">I</span>
          </ToolButton>
          <ToolButton label="Underline">
            <span className="border-b-2 border-[#2f5db5] font-['Liberation_Serif',serif] text-[18px] leading-[16px] text-[#2f5db5]">U</span>
          </ToolButton>
          <Sep />
          <div className="relative flex">
            <Combo label="Font" value="Segoe UI" className="w-[180px]" inner="pl-7" />
            <svg viewBox="0 0 14 14" className="pointer-events-none absolute top-1 left-[6px] h-[14px] w-[14px]" fill="none">
              <path d="M1 3.500V1.500h8v2M5 1.500V9M3.500 9h3" stroke="#b58a4a" strokeWidth="1.500" />
              <path d="M5 6.500v-2h8v2M9 4.500v8M7.500 12.500h3" stroke="#1f2f7a" strokeWidth="1.500" />
            </svg>
          </div>
          <Combo label="Size" value="9" className="w-[49px]" inner="pl-[2px]" />
          <Sep />
          <span className="w-6 text-center font-['Liberation_Serif',serif] text-[18px] leading-none font-bold text-[#101a7a]">A</span>
          <Swatch label="Text colour" />
          <span className="flex w-[25px] justify-center"><BucketIcon /></span>
          <Swatch label="Fill colour" />
          <span className="flex w-[25px] justify-center"><PenIcon /></span>
          <Swatch label="Highlight colour" />
          <Sep />
          <ToolButton label="Align left"><AlignIcon kind="left" /></ToolButton>
          <ToolButton label="Align centre"><AlignIcon kind="center" /></ToolButton>
          <ToolButton label="Align right" pressed><AlignIcon kind="right" /></ToolButton>
          <ToolButton label="Justify"><AlignIcon kind="full" /></ToolButton>
          <Sep />
          <ToolButton label="Bullets"><ListIcon /></ToolButton>
          <ToolButton label="Outdent"><IndentIcon out /></ToolButton>
          <ToolButton label="Indent"><IndentIcon /></ToolButton>
          <Sep />
          <ToolButton label="Clear formatting"><ClearFormatIcon /></ToolButton>
        </div>
      </div>
      <div className="flex min-h-0 flex-1 pt-[6px] pl-[5px]">
        <div className="flex flex-1 border border-[#a0a0a8] bg-white">
          <div className="flex-1 pt-[2px] pl-[2px]">
            <table className="w-[214px] table-fixed border-collapse text-right text-[12px] leading-[15px] font-semibold">
              <tbody>
                <tr className="h-[51px]">
                  <td className="border-2 border-black p-[2px]">
                    /uploadsoft/<br />softcat_setup.5.2<br />7.exe11:26:48
                  </td>
                  <td className="border-2 border-black" />
                </tr>
                {[0, 1, 2, 3].map((i) => (
                  <tr key={i} className="h-[21px]">
                    <td className="border-2 border-black" />
                    <td className="border-2 border-black" />
                  </tr>
                ))}
              </tbody>
            </table>
          </div>
          <div className="mr-px flex w-4 flex-col items-center justify-between bg-[#f0f0f0] py-[5px]">
            <Triangle dir="up" />
            <Triangle dir="down" />
          </div>
        </div>
        <div className="flex w-[96px] flex-col items-end gap-[6px] pt-px pr-[7px]">
          <PushButton className="h-[23px] w-[79px]">OK</PushButton>
          <PushButton className="h-[23px] w-[79px]">Cancel</PushButton>
        </div>
      </div>
      <footer className="flex h-[19px] shrink-0 items-end justify-end border-t border-[#d7d7d7] p-1">
        <svg viewBox="0 0 8 8" className="h-2 w-2" fill="#bdbdbd">
          <path d="M6 0h2v2H6zM3 3h2v2H3zM6 3h2v2H6zM0 6h2v2H0zM3 6h2v2H3zM6 6h2v2H6z" />
        </svg>
      </footer>
    </section>
  );
}

export default function App() {
  return (
    <div className="relative flex h-screen w-full flex-col overflow-hidden bg-[#f0f0f0] font-['Open_Sans','Noto_Sans',sans-serif] text-[12px] text-black">
      <header className="flex h-[23px] shrink-0 items-center bg-[#f3f3f3] pr-[18px] pl-[2px] text-[12px] text-[#8f8f8f]">
        <svg viewBox="0 0 16 16" className="h-4 w-4" fill="none">
          <path d="M0 0c1 7 3 14 16 15v1H0z" fill="#3a36c4" />
          <path d="M4 1h11v11H5z" fill="#e8b51c" />
          <path d="M6.500 1h6.500v5H6.500z" fill="#f7f1d8" />
          <path d="M6.500 8h6.500v4H6.500z" fill="#7a6a3a" />
          <path d="M10 9h2v3h-2z" fill="#ddd" />
        </svg>
        <h1 className="ml-[6px] flex-1">SoftCAT v5 - \Database\Sample.mdb</h1>
        <div className="flex gap-[35px]">
          <button type="button" aria-label="Minimize">
            <svg viewBox="0 0 11 11" className="h-[11px] w-[11px]" stroke="currentColor"><path d="M1 5.500h10" /></svg>
          </button>
          <button type="button" aria-label="Restore">
            <svg viewBox="0 0 11 11" className="h-[11px] w-[11px]" fill="none" stroke="currentColor">
              <rect x=".5" y="2.500" width="8" height="8" rx="1" />
              <path d="M2.500 .5h6a2 2 0 0 1 2 2v6" />
            </svg>
          </button>
          <button type="button" aria-label="Close">
            <svg viewBox="0 0 11 11" className="h-[11px] w-[11px]" stroke="currentColor"><path d="M.5.500l10 10M10.500.500l-10 10" /></svg>
          </button>
        </div>
      </header>
      <MenuBar items={["File", "View", "List", "Lookup", "Search", "Report", "Tools", "Sites", "Help"]} />
      <MainToolbars />
      <div className="flex h-[26px] shrink-0 items-center gap-[6px] bg-[linear-gradient(#d9e7f8_0,#bdd6f6_12px,#b0cdf2_12px,#d0e2f8_100%)] pl-[3px]">
        <button type="button" aria-label="View list" className="flex h-5 w-[19px] items-center justify-center border border-[#a3bfe6] bg-[#eff5fd]">
          <svg viewBox="0 0 8 4" className="h-1 w-2"><path d="M1 0h6L4 3.500z" fill="#000" /></svg>
        </button>
        <h2 className="text-[16px] font-semibold">Lookup View (Category)</h2>
      </div>

      <div className="flex min-h-0 flex-1">
        <Sidebar />
        <Splitter className="h-[276px]" />
        <main className="flex min-w-0 flex-1 flex-col">
          <div className="flex items-center gap-1 pt-1 pb-[3px]">
            <Combo label="Layout" value="Default Layout" className="flex-1" />
            <Combo label="Category field" value="Category" className="flex-1" />
            <Combo label="Filter" value="" className="flex-1" />
            <button type="button" aria-label="Disconnect filter" className="flex w-5 justify-center">
              <PlugIcon top="#aaa" bottom="#b9b9b9" className="h-4 w-4" />
            </button>
          </div>
          <div className="flex min-h-0 flex-1">
            <CategoryTree />
            <div className="ml-px flex">
              <Splitter className="h-[264px]" />
            </div>
            <div className="flex min-w-0 flex-1 flex-col gap-2">
              <LookupGrid />
              <DetailPane />
            </div>
          </div>
        </main>
      </div>

      <footer className="flex h-[15px] shrink-0 overflow-hidden border-t border-[#d7d7d7] bg-[#f0f0f0] text-[12px] leading-[18px]">
        <span className="w-[200px] border-r border-[#d7d7d7] pl-[5px]">1 / 24 / 154 / 154</span>
        <span className="w-[108px] border-r border-[#d7d7d7]" />
      </footer>

      <div className="absolute top-[38px] right-[67px] h-12 w-12 rounded-[3px] bg-[linear-gradient(#fff,#e2f6fd)] shadow-[0_1px_3px_rgba(0,0,0,0.35)]">
        <svg viewBox="0 0 48 48" className="h-12 w-12">
          <path d="M16 8h21l-9 9H7z" fill="#a8d878" />
          <path d="M7 17h21l6 7H13z" fill="#bdec92" />
          <path d="M15 25h20l7 7H21z" fill="#85dcff" />
          <path d="M21 32h21l-9 9H12z" fill="#05b8ff" />
        </svg>
      </div>

      <EditNotes />
      <InsertHyperlink />
    </div>
  );
}
